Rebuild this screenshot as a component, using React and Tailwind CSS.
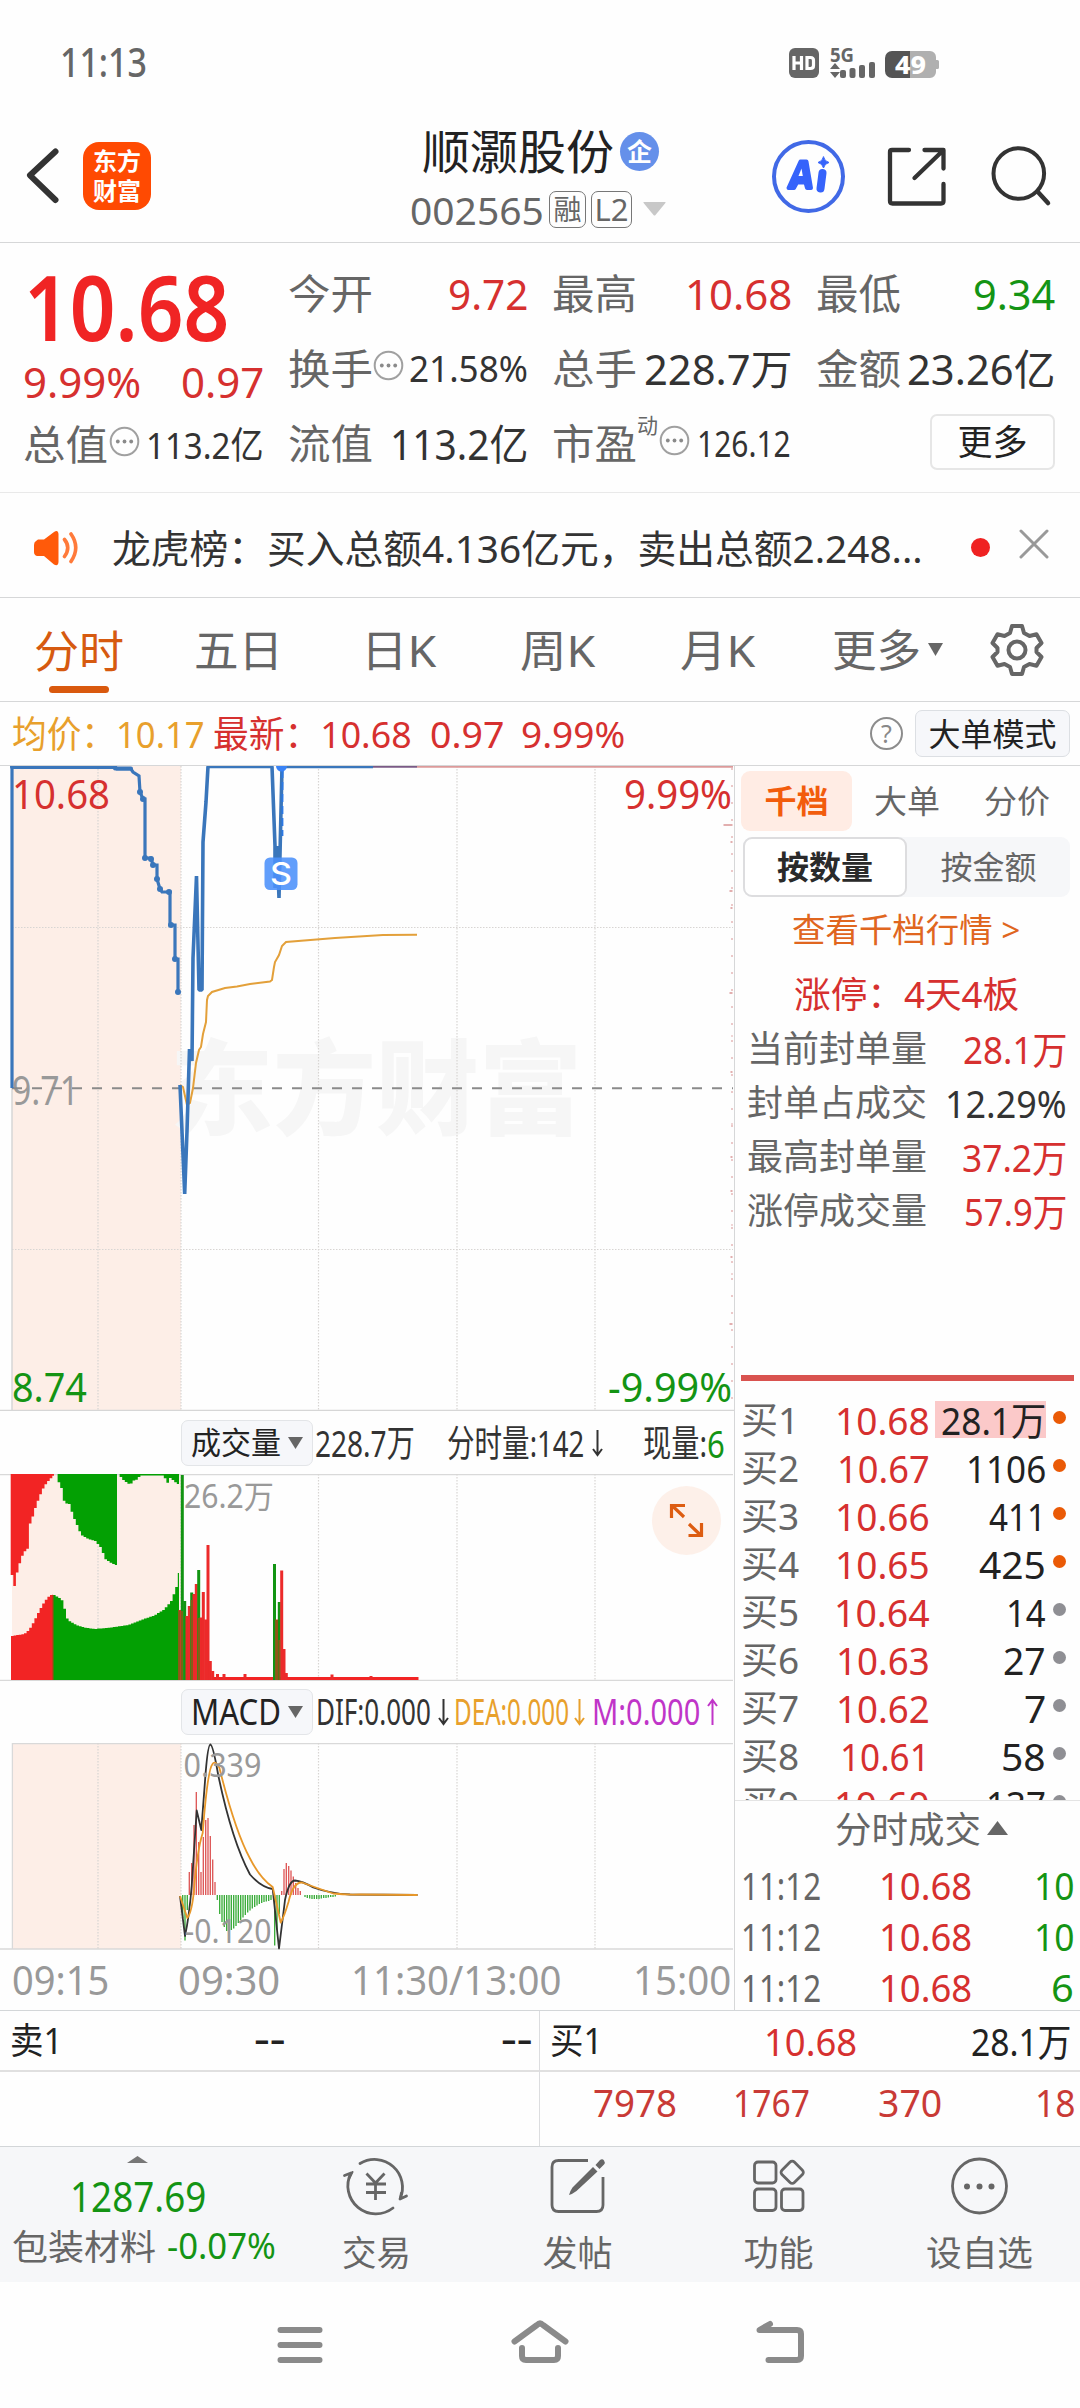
import { useLayoutEffect, useRef, useState } from "react";

const FONT = "font-['Noto_Sans','Noto_Sans_CJK_SC',sans-serif]";

/* Text condensed or widened horizontally so that it fills its own box. */
function Fit({ className = "", children }) {
  const outer = useRef(null);
  const inner = useRef(null);
  const [k, setK] = useState(1);
  useLayoutEffect(() => {
    setK(outer.current.clientWidth / inner.current.offsetWidth);
  }, []);
  return (
    <span ref={outer} className={`block shrink-0 whitespace-nowrap leading-none ${className}`}>
      <span ref={inner} className="inline-block origin-left" style={{ transform: `scaleX(${k})` }}>
        {children}
      </span>
    </span>
  );
}

function StatusBar() {
  return (
    <div className="flex h-[126px] items-center pl-[60px] pr-[138px]">
      <Fit className="mb-[4px] w-[87px] text-[39px] font-medium text-[#666]">11:13</Fit>
      <svg className="ml-auto" width="156" height="48" viewBox="786 39 156 48">
        <rect x="789" y="48" width="30" height="30" rx="6" fill="#666" />
        <g fill="none" stroke="#fff" strokeWidth="3.2">
          <path d="M794 56v14M801.500 56v14M794 63h8M807 57.500h3.500q3 0 3 3v5q0 3-3 3H807z" />
        </g>
        <text x="830" y="62" fontSize="19" fontWeight="700" fill="#666" textLength="24" lengthAdjust="spacingAndGlyphs">5G</text>
        <g fill="#666">
          <path d="M835 63l5 6h-10zM835 78l-5-6h10z" />
          <rect x="840" y="70" width="6" height="8" rx="2" />
          <rect x="849.500" y="68" width="6" height="10" rx="2" />
          <rect x="859" y="65" width="6" height="13" rx="2" />
          <rect x="869" y="62" width="6" height="16" rx="2" />
        </g>
        <path d="M910 51h20a6 6 0 0 1 6 6v3h1.500a1.500 1.500 0 0 1 1.500 1.500v6a1.500 1.500 0 0 1-1.500 1.500H936v3a6 6 0 0 1-6 6h-20z" fill="#b0b0b0" />
        <path d="M910 51h-18a7 7 0 0 0-7 7v13a7 7 0 0 0 7 7h18z" fill="#555" />
        <text x="895" y="73.500" fontSize="25" fontWeight="800" fill="#fff" textLength="31" lengthAdjust="spacingAndGlyphs">49</text>
      </svg>
    </div>
  );
}

function Header() {
  return (
    <header className="flex h-[117px] items-start border-b border-[#d6d7d8]">
      <div className="flex h-[99px] w-[410px] items-center">
        <svg className="ml-[24px]" width="40" height="60" viewBox="24 146 40 60">
          <path d="M55.500 151.500L30 175.300L55.500 200" fill="none" stroke="#333" strokeWidth="6" strokeLinecap="round" strokeLinejoin="round" />
        </svg>
        <div className="ml-[19px] flex h-[68px] w-[68px] flex-col items-center justify-center rounded-[16px] bg-[#ff4a02] text-[24px] font-bold leading-[30px] text-white">
          <span>东方</span>
          <span>财富</span>
        </div>
      </div>
      <div className="w-[260px]">
        <div className="flex h-[50px] items-center">
          <Fit className="ml-[12px] w-[192px] text-[47px] text-[#222]">顺灏股份</Fit>
          <div className="ml-[6px] flex h-[39px] w-[39px] items-center justify-center rounded-full bg-[#6590ea] text-[25px] font-bold leading-none text-white">企</div>
        </div>
        <div className="mt-[3px] flex h-[60px] items-center text-[#666]">
          <Fit className="w-[134px] text-[39px]">002565</Fit>
          <div className="ml-[5px] flex h-[37px] w-[37px] items-center justify-center rounded-[7px] border-[1.5px] border-[#777] text-[28px] leading-none">融</div>
          <div className="ml-[5px] flex h-[37px] w-[41px] items-center justify-center rounded-[7px] border-[1.5px] border-[#777] text-[31px] leading-none">L2</div>
          <svg className="ml-[11px]" width="23" height="14" viewBox="0 0 23 14"><path d="M1 0h21q1 0 .4 1L12.300 13.200q-.8 .8-1.600 0L.6 1Q0 0 1 0z" fill="#c8c8c8" /></svg>
        </div>
      </div>
      <div className="flex h-[99px] items-center pl-[98px]">
        <svg width="300" height="76" viewBox="768 137 300 76" fill="none">
          <circle cx="808.500" cy="175.500" r="34.500" stroke="#4169e6" strokeWidth="4" />
          <g stroke="#3663fb" fill="#3663fb" strokeLinejoin="round" strokeLinecap="round">
            <path d="M788.500 187L800.500 160.500H806.500L811 187H807L805.500 181.500H797L794 187z" strokeWidth="4" />
            <path d="M822.500 172L820.500 187.500" strokeWidth="8" />
            <path d="M823.500 156q1 4.500 5.500 5.500q-4.500 1-5.500 5.500q-1-4.500-5.500-5.500q4.500-1 5.500-5.500z" strokeWidth="1" />
          </g>
          <path d="M801.500 167.500l1.300 7.500h-4.300z" fill="#fff" />
          <path d="M909 149H892Q890 149 890 151V200Q890 202.500 892.500 202.500H941Q943.500 202.500 943.500 200V183M924.500 149H943.500V167.500M942.500 150L914.500 177" stroke="#333" strokeWidth="4.300" strokeLinecap="round" strokeLinejoin="round" />
          <circle cx="1018.800" cy="172.500" r="25.300" stroke="#333" strokeWidth="4" />
          <path d="M1037.500 190.500L1048 202" stroke="#333" strokeWidth="4.500" strokeLinecap="round" />
        </svg>
      </div>
    </header>
  );
}

function Dots({ className = "" }) {
  return (
    <svg className={`shrink-0 ${className}`} width="31" height="31" viewBox="0 0 31 31">
      <circle cx="15.500" cy="15.500" r="13.800" fill="none" stroke="#a0a0a0" strokeWidth="2" />
      <g fill="#8a8a8a"><circle cx="8.800" cy="15.500" r="1.900" /><circle cx="15.500" cy="15.500" r="1.900" /><circle cx="22.200" cy="15.500" r="1.900" /></g>
    </svg>
  );
}

function Quote() {
  const row = "flex h-[75px] items-center justify-between";
  const label = "w-[85px] text-[41px] text-[#666]";
  return (
    <section className="flex h-[250px] border-b border-[#e9e9e9] pl-[23px]">
      <div className="w-[241px] pt-[21px]">
        <div className="flex h-[84px] items-center">
          <Fit className="ml-[1px] w-[205px] text-[91px] font-semibold text-[#f02424]">10.68</Fit>
        </div>
        <div className="flex h-[68px] items-center justify-between text-[42px] text-[#d6302f]">
          <Fit className="w-[118px]">9.99%</Fit>
          <Fit className="w-[83px]">0.97</Fit>
        </div>
        <div className="flex h-[56px] items-center">
          <Fit className={label}>总值</Fit>
          <Dots className="mb-1.5 ml-[1px]" />
          <Fit className="ml-[6px] w-[118px] text-[37px] text-[#333]">113.2亿</Fit>
        </div>
      </div>
      <div className="ml-[24px] w-[240px] pt-[13px]">
        <div className={row}><Fit className={label}>今开</Fit><Fit className="w-[80px] text-[42px] text-[#d6302f]">9.72</Fit></div>
        <div className="flex h-[75px] items-center">
          <Fit className={label}>换手</Fit>
          <Dots className="mb-1.5" />
          <Fit className="ml-[5px] w-[119px] text-[36px] text-[#333]">21.58%</Fit>
        </div>
        <div className={row}><Fit className={label}>流值</Fit><Fit className="w-[138px] text-[42px] text-[#333]">113.2亿</Fit></div>
      </div>
      <div className="ml-[24px] w-[240px] pt-[13px]">
        <div className={row}><Fit className={label}>最高</Fit><Fit className="w-[107px] text-[42px] text-[#d6302f]">10.68</Fit></div>
        <div className={row}><Fit className={label}>总手</Fit><Fit className="w-[148px] text-[42px] text-[#333]">228.7万</Fit></div>
        <div className="flex h-[75px] items-center">
          <Fit className={label}>市盈</Fit>
          <span className="mb-9 w-[22px] text-[21px] leading-none text-[#666]">动</span>
          <Dots className="mb-1.5" />
          <Fit className="ml-[7px] w-[94px] text-[36px] text-[#333]">126.12</Fit>
        </div>
      </div>
      <div className="ml-[24px] w-[239px] pt-[13px]">
        <div className={row}><Fit className={label}>最低</Fit><Fit className="w-[82px] text-[42px] text-[#149414]">9.34</Fit></div>
        <div className={row}><Fit className={label}>金额</Fit><Fit className="w-[148px] text-[42px] text-[#333]">23.26亿</Fit></div>
        <div className="flex h-[75px] items-center justify-end">
          <div className="mb-1 flex h-[56px] w-[125px] items-center justify-center rounded-[7px] border-2 border-[#e6e6e6] text-[35px] leading-none text-[#222]">更多</div>
        </div>
      </div>
    </section>
  );
}

function News() {
  return (
    <section className="flex h-[105px] items-center border-b border-[#d6d7d8] pl-[34px] pt-[5px]">
      <svg width="46" height="38" viewBox="34 529 46 38">
        <path d="M36 541Q34 542 34 545V552Q34 555 37 556H44L54 564.500Q58 567 58.500 562V534Q58 529 54 532L44 539.500H38z" fill="#ff5a0a" />
        <path d="M64.500 539.500q6.500 8 0 17M71 534q9.500 13.500 0 27.500" fill="none" stroke="#ff7a3a" strokeWidth="3.600" strokeLinecap="round" />
      </svg>
      <Fit className="ml-[32px] w-[811px] text-[39px] text-[#333]">龙虎榜：买入总额4.136亿元，卖出总额2.248...</Fit>
      <span className="ml-[48px] size-[19px] rounded-full bg-[#ef2222]" />
      <svg className="mb-[8px] ml-[29px]" width="30" height="30" viewBox="0 0 30 30"><path d="M2 2L28 28M28 2L2 28" stroke="#999" strokeWidth="3" strokeLinecap="round" /></svg>
    </section>
  );
}

function Tabs() {
  return (
    <nav className="flex h-[104px] items-center border-b border-[#d6d7d8] pl-[34px] text-[44px] text-[#666]">
      <div className="flex h-full w-[90px] flex-col items-center pt-[31px]">
        <Fit className="w-[90px] text-[#d65a10]">分时</Fit>
        <span className="mt-[13px] h-[7px] w-[60px] rounded-full bg-[#d9590e]" />
      </div>
      <Fit className="ml-[70px] w-[89px]">五日</Fit>
      <Fit className="ml-[78px] w-[75px]">日K</Fit>
      <Fit className="ml-[84px] w-[75px]">周K</Fit>
      <Fit className="ml-[85px] w-[75px]">月K</Fit>
      <Fit className="ml-[77px] w-[89px]">更多</Fit>
      <svg className="ml-[7px]" width="15" height="13" viewBox="0 0 15 13"><path d="M0 0h15L7.500 13z" fill="#666" /></svg>
      <svg className="ml-[47px]" width="54" height="54" viewBox="0 0 54 54" fill="none" stroke="#666" strokeWidth="4" strokeLinejoin="round">
        <path d="M22 3H32L34 10L39.500 13L46.500 11.300L51.500 20L46.500 25V29L51.500 34L46.500 42.700L39.500 41L34 44L32 51H22L20 44L14.500 41L7.500 42.700L2.500 34L7.500 29V25L2.500 20L7.500 11.300L14.500 13L20 10z" />
        <circle cx="27" cy="27" r="8.500" />
      </svg>
    </nav>
  );
}

function InfoRow() {
  return (
    <div className="flex h-[64px] items-center border-b border-[#d6d7d8] pl-[12px] text-[37px] text-[#d6302f]">
      <Fit className="w-[193px] text-[#e8a02c]">均价：10.17</Fit>
      <Fit className="ml-[8px] w-[199px]">最新：10.68</Fit>
      <Fit className="ml-[18px] w-[74px]">0.97</Fit>
      <Fit className="ml-[17px] w-[104px]">9.99%</Fit>
      <div className="ml-[245px] flex size-[33px] items-center justify-center rounded-full border-2 border-[#8c8c8c] text-[25px] leading-none text-[#888]">?</div>
      <div className="ml-[12px] flex h-[47px] w-[155px] items-center justify-center rounded-[7px] border-[1.5px] border-[#dcdfe3] bg-[#f6f7fa] text-[32px] leading-none text-[#222]">大单模式</div>
    </div>
  );
}

const GRID_X = [98, 181, 318.5, 457, 595];

function Grid({ top, bottom }) {
  return (
    <g stroke="#d8d5d3" strokeWidth="1.200" strokeDasharray="1.500 1.500">
      {GRID_X.map((x) => <path key={x} d={`M${x} ${top}V${bottom}`} />)}
    </g>
  );
}

const TICKS = [[825, 9], [842, 2], [891, 3], [908, 2], [993, 3], [1036, 1], [1072, 2], [1124, 1], [1157, 2], [1191, 2], [1225, 1], [1257, 2], [1274, 1], [1324, 3]];

function PriceChart() {
  return (
    <svg className="block" width="734" height="645" viewBox="0 766 734 645" fill="none">
      <rect x="12" y="766" width="169" height="645" fill="#fdeee7" />
      <text x="170" y="1127" fontSize="103" fontWeight="900" fill="#f6f6f6" textLength="412">东方财富</text>
      <Grid top={766} bottom={1411} />
      <path d="M12 927.500H733M12 1249.500H733" stroke="#d8d5d3" strokeWidth="1.200" strokeDasharray="1.500 1.500" />
      <path d="M12 766V1411M0 1410.400H734" stroke="#d6d6d6" strokeWidth="1.500" />
      <text x="12" y="1105" fontSize="40" fill="#999" textLength="67" lengthAdjust="spacingAndGlyphs">9.71</text>
      <path d="M12 1088.300H733" stroke="#8a8a8a" strokeWidth="2" strokeDasharray="10 10" />
      <g stroke="#d99494" strokeWidth="1.500">
        <path d="M732 768V1410" strokeDasharray="2 15" strokeWidth="1" />
        {TICKS.map(([y, w]) => <path key={y} d={`M${732.500 - w} ${y}h${w}`} />)}
      </g>
      <path d="M180 1085L183 1087L187 1105L190 1103L193 1088L196 1063L199 1050L201 1047L203 1034L206 1022L207 1000L208 996L212 992L225 988L237 986.500L250 984L270 981.500L272 980L274 967L275 962L279 955L282 946L286 942L335 938L383 935L417 934.700" stroke="#e3a03a" strokeWidth="2" />
      <g stroke="#3a76bb" strokeWidth="3.600" strokeLinejoin="miter">
        <path d="M12 1088V766.500H115L117 769H131L133 772L139 776L140 792L143 799H145V858H151L153 865H157V879L160 889L162 892H170V925H175V959H178V992" strokeWidth="3.200" />
        <path d="M180 1085L184.700 1194L187 1131L189.500 1049L192 1061L193 958L196.500 876L199 990H202L203 842L206 802L208 766.500H272L275 846V888M277 846L279 898L282 766.500H373" strokeLinejoin="bevel" />
      </g>
      <path d="M12 767H115M115 768.500H131" stroke="#3a76bb" strokeWidth="4" strokeLinecap="round" />
      <g fill="#3a76bb">
        {[[140, 792], [143, 799], [145, 858], [151, 859], [153, 865], [157, 879], [160, 889], [169, 892], [171, 925], [175, 959], [178, 992]].map(([x, y]) => (
          <circle key={`${x}-${y}`} cx={x} cy={y} r="3" />
        ))}
      </g>
      <path d="M373 766.500H417" stroke="#7a5a86" strokeWidth="2.500" />
      <path d="M417 766.500H733" stroke="#dc9a9a" strokeWidth="2.500" />
      <path d="M282.500 770V836" stroke="#2b78e4" strokeWidth="1.800" strokeDasharray="8 4" />
      <circle cx="281.500" cy="766" r="5.500" fill="#3a83f6" />
      <rect x="264.500" y="857.500" width="33" height="32.500" rx="5.500" fill="#4b91fa" fillOpacity=".88" />
      <text x="270" y="885" fontFamily="Inter" fontSize="31" fontWeight="500" fill="#fff" textLength="22" lengthAdjust="spacingAndGlyphs">S</text>
      <g fontSize="40">
        <text x="12" y="808.500" fill="#d6302f" textLength="98" lengthAdjust="spacingAndGlyphs">10.68</text>
        <text x="624" y="808.500" fill="#d6302f" textLength="108" lengthAdjust="spacingAndGlyphs">9.99%</text>
        <text x="12" y="1401.500" fill="#149414" textLength="75" lengthAdjust="spacingAndGlyphs">8.74</text>
        <text x="608" y="1401.500" fill="#149414" textLength="124" lengthAdjust="spacingAndGlyphs">-9.99%</text>
      </g>
    </svg>
  );
}

/* Height profile, as [x, y] corner points, turned into a stepped bar silhouette. */
function steps(points, base, step = 2.6) {
  const last = points[points.length - 1][0];
  let d = `M${points[0][0]} ${base}`;
  for (let x = points[0][0]; x < last; x += step) {
    let i = 0;
    while (i < points.length - 2 && points[i + 1][0] < x) i += 1;
    const [x0, y0] = points[i];
    const [x1, y1] = points[i + 1];
    const y = x1 === x0 ? y1 : y0 + ((y1 - y0) * (x - x0)) / (x1 - x0);
    d += `V${y.toFixed(1)}H${Math.min(x + step, last).toFixed(1)}`;
  }
  return `${d}V${base}z`;
}

const UP_RED = [[10.7, 1575], [13.3, 1586], [16, 1572], [20, 1558], [23, 1552], [28, 1547], [28.7, 1524], [32, 1515], [35, 1505], [39, 1495], [43, 1486], [48, 1480], [54, 1474]];
const UP_GREEN = [[55, 1474], [57, 1481], [62, 1492], [63, 1503], [68, 1504], [72, 1516], [77, 1528], [80, 1535], [87, 1539], [94, 1541], [100, 1548], [104, 1559], [110, 1563], [117, 1566]];
const FRINGE = [[117, 1474], [122, 1480], [125, 1482], [129, 1485], [131.500, 1481], [137, 1479], [138.500, 1475.500], [162, 1475.500], [165, 1480], [167, 1484], [169, 1478], [173, 1481], [176, 1484], [179, 1484]];
const LOW_RED = [[11, 1636], [23, 1634], [28, 1630], [33, 1621], [38, 1611], [43, 1602], [48, 1596], [51, 1594.500], [53, 1594.500]];
const LOW_GREEN = [[53, 1595], [60, 1599], [63, 1604], [64, 1616], [68, 1621], [75, 1625], [83, 1627.500], [93, 1629], [110, 1627.500], [127, 1625], [140, 1620], [153, 1615.500], [163, 1609.500], [170, 1601], [175, 1588], [178, 1572], [179, 1572]];
const VOLUME = [
  [180, 1610, 0], [182.300, 1475, 1], [184.700, 1601, 1], [187, 1616, 0], [189.300, 1606, 0], [191.700, 1592.500, 1], [194, 1594, 0],
  [196.300, 1584, 0], [198.700, 1570, 1], [201, 1617.500, 0], [203.300, 1592, 0], [205.700, 1619.500, 0], [208, 1545, 0], [210.300, 1661, 0],
  [212.700, 1671, 0], [217.500, 1674, 0], [224, 1674, 0], [245, 1674, 0], [274.500, 1564, 1], [277, 1619.500, 0], [279.300, 1602, 1],
  [281.700, 1570.500, 0], [284, 1649, 0], [286.300, 1673, 0], [332, 1674.500, 0], [371, 1676, 0],
];

function VolumeChart() {
  return (
    <svg className="block" width="734" height="207" viewBox="0 1474 734 207" fill="none">
      <rect x="12" y="1474" width="169" height="206" fill="#fdeee7" />
      <path d="M0 1474.600H733M0 1680.300H733" stroke="#d9d9d9" strokeWidth="1.300" />
      <Grid top={1474} bottom={1680} />
      <path d={steps(UP_RED, 1474)} fill="#f22424" />
      <path d={steps(UP_GREEN, 1474)} fill="#03a003" />
      <path d={steps(FRINGE, 1474)} fill="#03a003" />
      <path d={steps(LOW_RED, 1680)} fill="#f22424" />
      <path d={steps(LOW_GREEN, 1680)} fill="#03a003" />
      <path d="M53 1595V1680" stroke="#9c4a14" strokeWidth="1.200" />
      <path d="M212 1678.500H418.500" stroke="#f22424" strokeWidth="3" />
      {VOLUME.map(([x, y, down]) => <rect key={x} x={x - 1.500} y={y} width="3" height={1680 - y} fill={down ? "#129412" : "#ec2a2a"} />)}
      <path d="M179 1611V1680M182 1611V1680M191.700 1600V1680M198.700 1618V1680M277 1620V1680M279.300 1640V1680" stroke="#8a5a16" strokeWidth="1.800" />
      <text x="184" y="1507.500" fontSize="32" fill="#999" textLength="90" lengthAdjust="spacingAndGlyphs">26.2万</text>
      <circle cx="686.500" cy="1520.500" r="34.500" fill="#fdf0e9" />
      <path d="M684 1517L672 1505.500M671.500 1518V1505.500H685M689 1524L701 1535.500M688.500 1535.500H701.500V1523" stroke="#dd5d12" strokeWidth="3.200" />
    </svg>
  );
}

const MACD_BARS = [
  [182.700, 1918], [185, 1940.500], [187.300, 1910], [189.300, 1872], [191.700, 1863], [194, 1825], [196.300, 1792], [198.700, 1842], [201, 1872],
  [203.300, 1837], [205.700, 1820], [208, 1818], [210.300, 1836], [212.700, 1859.500], [215, 1882], [217.300, 1900], [219.700, 1914], [222, 1922],
  [224.300, 1927], [226.700, 1931], [229, 1932], [231.300, 1930], [233.700, 1928.500], [236, 1926], [238.300, 1923], [240.700, 1920], [243, 1917.500],
  [245.300, 1915], [247.700, 1912.500], [250, 1910.500], [252.300, 1908.500], [254.700, 1907], [257, 1905.500], [259.300, 1904], [261.700, 1903],
  [264, 1902], [266.300, 1901.500], [268.700, 1901], [271, 1900], [274.700, 1945.500], [277, 1930], [279.300, 1914], [281.700, 1891], [284, 1869],
  [286.300, 1863], [288.700, 1866], [291, 1870.500], [293.300, 1876.500], [295.700, 1883], [298, 1888], [300.300, 1891], [305, 1897], [307.300, 1898],
  [309.700, 1898.500], [312, 1899], [314.300, 1899], [316.700, 1899], [319, 1899], [321.300, 1898.500], [323.700, 1898], [326, 1898], [328.300, 1897.500],
  [330.700, 1897], [333, 1897], [335.300, 1896.500],
];

function MacdChart() {
  return (
    <svg className="block" width="734" height="207" viewBox="0 1743 734 207" fill="none">
      <rect x="12" y="1743" width="169" height="206" fill="#fdeee7" />
      <path d="M12 1743.500H733M0 1949H733M12.400 1743V1949" stroke="#d9d9d9" strokeWidth="1.300" />
      <Grid top={1743} bottom={1949} />
      {MACD_BARS.map(([x, y]) => <path key={x} d={`M${x} 1895V${y}`} stroke={y > 1895 ? "#33a933" : "#dd5252"} strokeWidth="1.300" />)}
      <g strokeWidth="1.800" strokeLinejoin="round">
        <path d="M180 1896L185 1936Q189 1918 191.700 1886L196.700 1810.500L201.300 1830L205.700 1772Q208 1744.500 210.400 1744.500Q213 1745 218.300 1775.500Q232 1841 250 1874.500Q261 1887 272.700 1889L279 1948.500L285 1900Q289 1880.500 295 1880.500Q302 1881 313.300 1887.500Q330 1893.500 350 1894.500L417.500 1895" stroke="#333" />
        <path d="M180 1896L187.300 1918Q192 1912 194 1890Q197 1851 202.700 1833Q207.500 1770 212.500 1764Q215 1760 219.300 1767.500Q235 1831 250 1858.500Q260 1878 272.700 1887L280.700 1922.500Q284 1917 288.500 1902Q293 1882 302 1882.500Q318 1888.500 333.300 1893.500Q345 1895 360 1894.500L417.500 1895" stroke="#e8982a" />
      </g>
      <g fontSize="32" fill="#999">
        <text x="183.500" y="1776.500" textLength="78" lengthAdjust="spacingAndGlyphs">0.339</text>
        <text x="184.500" y="1942.500" textLength="87" lengthAdjust="spacingAndGlyphs">-0.120</text>
      </g>
    </svg>
  );
}

function Arrow({ up, className = "" }) {
  return (
    <svg className={`shrink-0 ${className}`} width="11" height="28" viewBox="0 0 11 28" fill="none" stroke="currentColor" strokeWidth="2">
      <path d={up ? "M5.500 27V2M1 8L5.500 2L10 8" : "M5.500 1V26M1 20L5.500 26L10 20"} />
    </svg>
  );
}

function Picker({ children }) {
  return (
    <div className="ml-[181px] flex h-[46px] w-[132px] shrink-0 items-center rounded-[7px] border-[1.5px] border-[#e3e5e8] bg-[#f6f7fa] pl-[9px] text-[#222]">
      {children}
      <svg className="ml-[7px]" width="15" height="12" viewBox="0 0 15 12"><path d="M0 0h15L7.500 12z" fill="#666" /></svg>
    </div>
  );
}

function Charts() {
  return (
    <div className="w-[734px] shrink-0">
      <PriceChart />
      <div className="flex h-[63px] items-center text-[#333]">
        <Picker><Fit className="w-[90px] text-[31px]">成交量</Fit></Picker>
        <Fit className="ml-[2px] w-[100px] text-[37px]">228.7万</Fit>
        <Fit className="ml-[32px] w-[137px] text-[37px]">分时量:142</Fit>
        <Arrow className="ml-[8px]" />
        <Fit className="ml-[40px] w-[64px] text-[37px]">现量:</Fit>
        <Fit className="w-[18px] text-[38px] text-[#149414]">6</Fit>
      </div>
      <VolumeChart />
      <div className="flex h-[62px] items-center text-[36px] text-[#333]">
        <Picker><Fit className="w-[90px]">MACD</Fit></Picker>
        <Fit className="ml-[3px] w-[115px]">DIF:0.000</Fit>
        <Arrow className="ml-[7px]" />
        <Fit className="ml-[5px] w-[115px] text-[#e8a02c]">DEA:0.000</Fit>
        <Arrow className="ml-[5px] text-[#e8a02c]" />
        <Fit className="ml-[7px] w-[108px] text-[#c035c8]">M:0.000</Fit>
        <Arrow up className="ml-[7px] text-[#c035c8]" />
      </div>
      <MacdChart />
      <div className="flex h-[60px] items-center text-[40px] text-[#999]">
        <Fit className="ml-[12px] w-[97px]">09:15</Fit>
        <Fit className="ml-[69px] w-[102px]">09:30</Fit>
        <Fit className="ml-[71px] w-[210px]">11:30/13:00</Fit>
        <Fit className="ml-[72px] w-[98px]">15:00</Fit>
      </div>
    </div>
  );
}

const STATS = [
  ["当前封单量", "28.1万", "w-[104px] text-[#d6302f]"],
  ["封单占成交", "12.29%", "w-[122px] text-[#333]"],
  ["最高封单量", "37.2万", "w-[105px] text-[#d6302f]"],
  ["涨停成交量", "57.9万", "w-[103px] text-[#d6302f]"],
];

const BIDS = [
  ["买1", "10.68", "w-[95px]", "28.1万", "w-[105px]", true],
  ["买2", "10.67", "w-[93px]", "1106", "w-[80px]", true],
  ["买3", "10.66", "w-[95px]", "411", "w-[57px]", true],
  ["买4", "10.65", "w-[95px]", "425", "w-[67px]", true],
  ["买5", "10.64", "w-[96px]", "14", "w-[40px]", false],
  ["买6", "10.63", "w-[94px]", "27", "w-[43px]", false],
  ["买7", "10.62", "w-[94px]", "7", "w-[22px]", false],
  ["买8", "10.61", "w-[90px]", "58", "w-[45px]", false],
  ["买9", "10.60", "w-[96px]", "137", "w-[60px]", false],
];

const TRADES = [["10", "w-[40px]"], ["10", "w-[40px]"], ["6", "w-[23px]"]];

function SidePanel() {
  return (
    <aside className="flex w-[346px] flex-col border-l border-[#d6d7d8] [&>*]:shrink-0">
      <div className="ml-[6px] mt-[5px] flex h-[60px] items-center text-[32px] text-[#666]">
        <div className="flex h-full w-[111px] items-center justify-center rounded-[9px] bg-[#ffece4] font-bold leading-none text-[#f25c0c]">千档</div>
        <Fit className="ml-[22px] w-[66px]">大单</Fit>
        <Fit className="ml-[44px] w-[66px]">分价</Fit>
      </div>
      <div className="ml-[8px] mt-[6px] flex h-[60px] w-[327px] items-center rounded-[9px] bg-[#f6f7f9] text-[32px] leading-none text-[#666]">
        <div className="flex h-full w-[164px] items-center justify-center rounded-[9px] border-2 border-[#dddddf] bg-white font-bold text-[#2a2a2a]">按数量</div>
        <div className="flex-1 text-center">按金额</div>
      </div>
      <div className="flex h-[65px] items-center">
        <Fit className="ml-[57px] w-[228px] text-[33px] text-[#e0661f]">查看千档行情 &gt;</Fit>
      </div>
      <div className="mt-[6px] flex h-[54px] items-center">
        <Fit className="ml-[59px] w-[225px] text-[36px] text-[#d6302f]">涨停：4天4板</Fit>
      </div>
      {STATS.map(([name, value, style]) => (
        <div key={name} className="flex h-[54px] items-center justify-between pl-[12px] pr-[13px]">
          <Fit className="w-[180px] text-[36px] text-[#666]">{name}</Fit>
          <Fit className={`text-[38px] ${style}`}>{value}</Fit>
        </div>
      ))}
      <div className="ml-[6px] mt-[137px] h-[6px] w-[333px] bg-[#d9534f]" />
      <div className="h-[420px] overflow-hidden border-b border-[#e4e4e4] pt-[14px]">
        {BIDS.map(([name, price, pw, vol, vw, big], i) => (
          <div key={name} className="flex h-[48px] items-center pl-[6px] text-[39px]">
            <Fit className="w-[58px] text-[37px] text-[#666]">{name}</Fit>
            <div className="flex w-[131px] justify-end"><Fit className={`text-[#d6302f] ${pw}`}>{price}</Fit></div>
            <div className={`ml-[5px] flex h-[37px] w-[111px] items-center justify-end ${i === 0 ? "bg-[#fbc9c9]" : ""}`}>
              <Fit className={`text-[#222] ${vw}`}>{vol}</Fit>
            </div>
            <span className={`mb-1 ml-[7px] size-[13px] rounded-full ${big ? "bg-[#ea5a06]" : "bg-[#8f8f94]"}`} />
          </div>
        ))}
      </div>
      <div className="flex h-[58px] items-center">
        <Fit className="ml-[100px] w-[146px] text-[36px] text-[#666]">分时成交</Fit>
        <svg className="mb-1 ml-[6px]" width="21" height="14" viewBox="0 0 21 14"><path d="M10.500 0L21 14H0z" fill="#666" /></svg>
      </div>
      {TRADES.map(([vol, w], i) => (
        <div key={i} className="flex h-[51px] items-center pl-[6px] text-[38px]">
          <Fit className="w-[80px] text-[#666]">11:12</Fit>
          <Fit className="ml-[58px] w-[93px] text-[#d6302f]">10.68</Fit>
          <div className="flex w-[102px] justify-end"><Fit className={`text-[#149414] ${w}`}>{vol}</Fit></div>
        </div>
      ))}
    </aside>
  );
}

function Depth() {
  return (
    <section className="flex h-[137px] border-y border-[#d3d6d8] bg-[#fefefe] text-[38px] text-[#222]">
      <div className="w-[540px] border-r border-[#dcdddf]">
        <div className="flex h-[61px] items-center border-b-2 border-[#e0e0e0]">
          <Fit className="ml-[10px] w-[53px] text-[36px]">卖1</Fit>
          <Fit className="mb-[5px] ml-[191px] w-[31px] font-medium">--</Fit>
          <Fit className="mb-[5px] ml-[216px] w-[31px] font-medium">--</Fit>
        </div>
      </div>
      <div className="w-[540px]">
        <div className="flex h-[61px] items-center border-b-2 border-[#e0e0e0]">
          <Fit className="ml-[10px] w-[53px] text-[36px]">买1</Fit>
          <Fit className="ml-[161px] w-[93px] text-[#d6302f]">10.68</Fit>
          <Fit className="ml-[114px] w-[100px]">28.1万</Fit>
        </div>
        <div className="flex h-[60px] items-center text-[#c93a36]">
          <Fit className="ml-[53px] w-[84px]">7978</Fit>
          <Fit className="ml-[56px] w-[77px]">1767</Fit>
          <Fit className="ml-[68px] w-[64px]">370</Fit>
          <Fit className="ml-[93px] w-[40px]">18</Fit>
        </div>
      </div>
    </section>
  );
}

function Action({ className, label, labelClass, viewBox, children }) {
  return (
    <div className={`flex flex-col items-center ${className}`}>
      <svg className="mt-[6px]" width="68" height="66" viewBox={viewBox} fill="none" stroke="#666" strokeWidth="2.800" strokeLinecap="round" strokeLinejoin="round">{children}</svg>
      <Fit className={`mt-[16px] text-[35px] text-[#666] ${labelClass}`}>{label}</Fit>
    </div>
  );
}

function Toolbar() {
  return (
    <section className="flex h-[135px] bg-[#f6f7f9]">
      <div className="w-[275px]">
        <svg className="ml-[127px] mt-[9px]" width="21" height="7" viewBox="0 0 21 7"><path d="M10.500 0L21 7H0z" fill="#777" /></svg>
        <div className="flex h-[66px] items-center"><Fit className="ml-[70px] w-[136px] text-[42px] text-[#149414]">1287.69</Fit></div>
        <div className="flex h-[34px] items-center">
          <Fit className="ml-[12px] w-[144px] text-[35px] text-[#666]">包装材料</Fit>
          <Fit className="ml-[11px] w-[109px] text-[36px] text-[#149414]">-0.07%</Fit>
        </div>
      </div>
      <Action className="w-[202px]" label="交易" labelClass="w-[69px]" viewBox="342 2153 68 66">
        <path d="M360 2163.500A28 28 0 0 1 400 2199L406.500 2196M393 2208A28 28 0 0 1 351 2173L344.500 2175.500" />
        <path d="M400 2199l1-6M352.500 2172l-3.500 7" strokeWidth="2" />
        <path d="M366.500 2173.500L375.500 2183L384.500 2173.500M375.500 2183V2200M366 2184H386M366 2192.500H386" strokeLinecap="butt" />
      </Action>
      <Action className="w-[201px]" label="发帖" labelClass="w-[70px]" viewBox="543.500 2153 68 66">
        <path d="M587.500 2160.500H558Q551.500 2160.500 551.500 2167V2205Q551.500 2211.500 558 2211.500H596Q602.500 2211.500 602.500 2205V2177" strokeLinecap="butt" />
        <path d="M592.500 2167L597 2171.500L576 2191Q572 2194 568.500 2195Q569.500 2191 572 2187.500zM595 2165L599.500 2160Q602 2158.500 603.500 2160.500Q605 2162.500 603.500 2164.500L599 2169z" fill="#666" stroke="none" />
      </Action>
      <Action className="w-[201px]" label="功能" labelClass="w-[70px]" viewBox="744.500 2153 68 66">
        <rect x="754" y="2162" width="21.500" height="21" rx="3.500" />
        <rect x="754" y="2189" width="21.500" height="21.500" rx="3.500" />
        <rect x="781" y="2189" width="21.500" height="21.500" rx="3.500" />
        <rect x="783" y="2163.500" width="17.500" height="17.500" rx="3" transform="rotate(45 791.700 2172.200)" />
      </Action>
      <Action className="w-[201px]" label="设自选" labelClass="w-[107px]" viewBox="945.500 2153 68 66">
        <circle cx="979" cy="2186" r="27" />
        <g fill="#666" stroke="none"><circle cx="966.500" cy="2186.500" r="3" /><circle cx="979" cy="2186.500" r="3" /><circle cx="991" cy="2186.500" r="3" /></g>
      </Action>
    </section>
  );
}

function SystemNav() {
  return (
    <div className="flex h-[126px] items-start pt-[32px]">
      <svg width="1080" height="60" viewBox="0 2314 1080 60" fill="none" stroke="#8a8a8a" strokeWidth="6" strokeLinecap="round" strokeLinejoin="round">
        <path d="M280.500 2330H319.500M280.500 2345H319.500M280.500 2360H319.500" />
        <path d="M514.500 2341.500L537 2325Q540 2322 543 2325L565.500 2341.500M522 2348V2356Q522 2360 526 2360H554Q558 2360 558 2356V2348" />
        <path d="M768.500 2360H797Q801 2360 801 2356V2334Q801 2330 797 2330H759.500L770 2324" />
      </svg>
    </div>
  );
}

export default function App() {
  return (
    <main className={`flex h-[2408px] w-[1080px] flex-col overflow-hidden bg-[#fefefe] ${FONT}`}>
      <StatusBar />
      <Header />
      <Quote />
      <News />
      <Tabs />
      <InfoRow />
      <div className="flex h-[1244px] shrink-0">
        <Charts />
        <SidePanel />
      </div>
      <Depth />
      <Toolbar />
      <SystemNav />
    </main>
  );
}
